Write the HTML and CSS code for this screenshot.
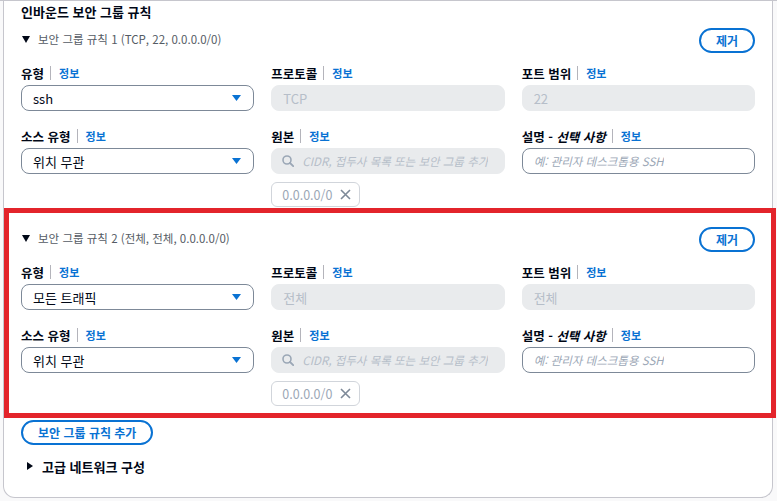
FILE: index.html
```html
<!DOCTYPE html>
<html lang="ko">
<head>
    <meta charset="UTF-8">
    <meta name="viewport" content="width=device-width, initial-scale=1.0">
    <title>인바운드 보안 그룹 규칙</title>
    <link rel="stylesheet" href="styles.css">
</head>
<body>
    <div class="page">
        <section class="panel">
            <h2 class="panel-title">인바운드 보안 그룹 규칙</h2>

            <div class="rule">
                <div class="rule-head">
                    <span class="rule-toggle">
                        <svg class="caret-down" width="8" height="7" viewBox="0 0 8 7"><path d="M0 0h8L4 7z" fill="#000716"/></svg>
                        보안 그룹 규칙 1 (TCP, 22, 0.0.0.0/0)
                    </span>
                    <button class="btn">제거</button>
                </div>
                <div class="fields">
                    <div class="field">
                        <div class="label"><span class="label-text">유형</span><span class="info">정보</span></div>
                        <div class="select">ssh<svg class="arrow" width="9" height="6" viewBox="0 0 9 6"><path d="M0 0h9L4.5 6z" fill="#0972d3"/></svg></div>
                    </div>
                    <div class="field">
                        <div class="label"><span class="label-text">프로토콜</span><span class="info">정보</span></div>
                        <div class="input disabled">TCP</div>
                    </div>
                    <div class="field">
                        <div class="label"><span class="label-text">포트 범위</span><span class="info">정보</span></div>
                        <div class="input disabled">22</div>
                    </div>
                    <div class="field">
                        <div class="label"><span class="label-text">소스 유형</span><span class="info">정보</span></div>
                        <div class="select">위치 무관<svg class="arrow" width="9" height="6" viewBox="0 0 9 6"><path d="M0 0h9L4.5 6z" fill="#0972d3"/></svg></div>
                    </div>
                    <div class="field">
                        <div class="label"><span class="label-text">원본</span><span class="info">정보</span></div>
                        <div class="input search">
                            <svg class="search-icon" width="12" height="12" viewBox="0 0 12 12"><circle cx="5" cy="5" r="4" fill="none" stroke="#9ba7b6" stroke-width="1.6"/><path d="M8 8l3.2 3.2" stroke="#9ba7b6" stroke-width="1.8" stroke-linecap="round"/></svg>
                            <span class="placeholder">CIDR, 접두사 목록 또는 보안 그룹 추가</span>
                        </div>
                        <div class="token">0.0.0.0/0<svg class="dismiss" width="11" height="11" viewBox="0 0 11 11"><path d="M1 1l9 9M10 1l-9 9" stroke="#7d8998" stroke-width="1.6"/></svg></div>
                    </div>
                    <div class="field">
                        <div class="label"><span class="label-text">설명 - <em>선택 사항</em></span><span class="info">정보</span></div>
                        <div class="input"><span class="placeholder">예: 관리자 데스크톱용 SSH</span></div>
                    </div>
                </div>
            </div>

            <div class="rule rule-marked">
                <div class="rule-head">
                    <span class="rule-toggle">
                        <svg class="caret-down" width="8" height="7" viewBox="0 0 8 7"><path d="M0 0h8L4 7z" fill="#000716"/></svg>
                        보안 그룹 규칙 2 (전체, 전체, 0.0.0.0/0)
                    </span>
                    <button class="btn">제거</button>
                </div>
                <div class="fields">
                    <div class="field">
                        <div class="label"><span class="label-text">유형</span><span class="info">정보</span></div>
                        <div class="select">모든 트래픽<svg class="arrow" width="9" height="6" viewBox="0 0 9 6"><path d="M0 0h9L4.5 6z" fill="#0972d3"/></svg></div>
                    </div>
                    <div class="field">
                        <div class="label"><span class="label-text">프로토콜</span><span class="info">정보</span></div>
                        <div class="input disabled">전체</div>
                    </div>
                    <div class="field">
                        <div class="label"><span class="label-text">포트 범위</span><span class="info">정보</span></div>
                        <div class="input disabled">전체</div>
                    </div>
                    <div class="field">
                        <div class="label"><span class="label-text">소스 유형</span><span class="info">정보</span></div>
                        <div class="select">위치 무관<svg class="arrow" width="9" height="6" viewBox="0 0 9 6"><path d="M0 0h9L4.5 6z" fill="#0972d3"/></svg></div>
                    </div>
                    <div class="field">
                        <div class="label"><span class="label-text">원본</span><span class="info">정보</span></div>
                        <div class="input search">
                            <svg class="search-icon" width="12" height="12" viewBox="0 0 12 12"><circle cx="5" cy="5" r="4" fill="none" stroke="#9ba7b6" stroke-width="1.6"/><path d="M8 8l3.2 3.2" stroke="#9ba7b6" stroke-width="1.8" stroke-linecap="round"/></svg>
                            <span class="placeholder">CIDR, 접두사 목록 또는 보안 그룹 추가</span>
                        </div>
                        <div class="token">0.0.0.0/0<svg class="dismiss" width="11" height="11" viewBox="0 0 11 11"><path d="M1 1l9 9M10 1l-9 9" stroke="#7d8998" stroke-width="1.6"/></svg></div>
                    </div>
                    <div class="field">
                        <div class="label"><span class="label-text">설명 - <em>선택 사항</em></span><span class="info">정보</span></div>
                        <div class="input"><span class="placeholder">예: 관리자 데스크톱용 SSH</span></div>
                    </div>
                </div>
            </div>

            <button class="btn btn-add">보안 그룹 규칙 추가</button>

            <div class="advanced">
                <svg class="caret-right" width="6" height="8" viewBox="0 0 6 8"><path d="M0 0l6 4-6 4z" fill="#000716"/></svg>
                고급 네트워크 구성
            </div>
        </section>
    </div>
</body>
</html>
```

FILE: styles.css
```css
body {
    margin: 0;
    background-color: #f9f9fa;
    font-family: 'Noto Sans CJK KR', 'Open Sans', sans-serif;
    color: #000716;
}

.page {
    border-top: 1px solid #c6c6cd;
    padding: 0 4px 0 3px;
}

.panel {
    background-color: #fff;
    border: 1px solid #c6c6cd;
    border-top: none;
    border-radius: 0 0 12px 12px;
    padding: 2px 17px 22px 17px;
}

.panel-title {
    margin: 0 0 7px 0;
    font-size: 13px;
    font-weight: 700;
    line-height: 18px;
}

.rule-head {
    display: flex;
    align-items: center;
    justify-content: space-between;
    height: 25px;
}

.rule-toggle {
    display: flex;
    align-items: center;
    font-size: 11.5px;
    color: #545b64;
    padding-bottom: 3px;
}

.caret-down {
    margin: 0 8px 0 1px;
}

.btn {
    height: 25px;
    padding: 0 15px;
    border: 2px solid #0972d3;
    border-radius: 14px;
    background: #fff;
    color: #0972d3;
    font-family: inherit;
    font-size: 12px;
    font-weight: 700;
    line-height: 19px;
    cursor: pointer;
}

.fields {
    display: grid;
    grid-template-columns: repeat(3, minmax(0, 1fr));
    column-gap: 17px;
    row-gap: 16px;
    margin-top: 11px;
}

.label {
    display: flex;
    align-items: center;
    height: 18px;
    margin-bottom: 3px;
    font-size: 12.5px;
    font-weight: 700;
}

.label-text em {
    font-style: italic;
}

.info {
    margin-left: 6px;
    padding-left: 8px;
    border-left: 1px solid #b4b4bb;
    line-height: 14px;
    font-size: 11px;
    color: #0972d3;
}

.select,
.input {
    box-sizing: border-box;
    display: flex;
    align-items: center;
    height: 26px;
    padding: 0 11px;
    border: 1px solid #7d8998;
    border-radius: 8px;
    font-size: 13px;
    background: #fff;
}

.select {
    justify-content: space-between;
}

.select .arrow {
    margin-right: 1px;
}

.input.disabled {
    border-color: #e9ebed;
    background-color: #e9ebed;
    color: #b6bec9;
}

.input.search {
    border-color: #e9ebed;
    background-color: #e9ebed;
    padding-left: 10px;
    padding-right: 6px;
}

.search-icon {
    flex: none;
    margin-right: 8px;
}

.placeholder {
    font-style: italic;
    font-size: 11.5px;
    color: #9ba7b6;
    white-space: nowrap;
    overflow: hidden;
}

.input.search .placeholder {
    color: #b6bec9;
}

.token {
    box-sizing: border-box;
    display: inline-flex;
    align-items: center;
    gap: 8px;
    height: 25px;
    margin-top: 8px;
    padding: 0 8px 0 10px;
    border: 1px solid #d1d5db;
    border-radius: 6px;
    font-size: 12.5px;
    color: #9ba7b6;
}

.rule-marked {
    margin: 1px -21px 0 -17px;
    padding: 19px 21px 12px 17px;
    outline: 5px solid #e3242b;
    outline-offset: -5px;
}

.btn-add {
    display: block;
    margin-top: 2px;
}

.advanced {
    display: flex;
    align-items: center;
    margin-top: 12px;
    height: 18px;
    font-size: 13px;
    font-weight: 700;
}

.caret-right {
    margin: 0 9px 0 6px;
}
```
